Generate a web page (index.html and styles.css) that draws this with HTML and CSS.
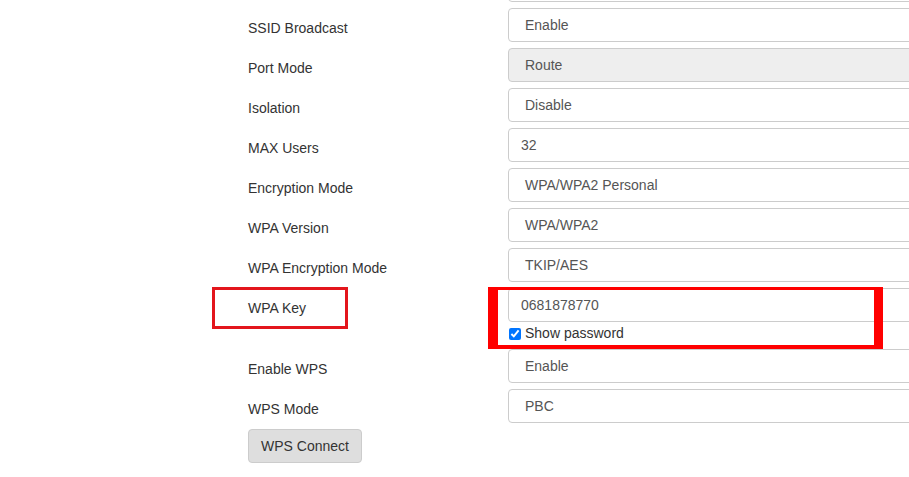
FILE: index.html
```html
<!DOCTYPE html>
<html lang="en">
<head>
  <meta charset="UTF-8">
  <meta name="viewport" content="width=device-width, initial-scale=1.0">
  <title>Wireless Settings</title>
  <link rel="stylesheet" href="styles.css">
</head>
<body>
  <div class="form">
    <!-- row scrolled above the top edge, only its box bottom shows -->
    <div class="row">
      <div class="label"></div>
      <div class="control"><div class="field"></div></div>
    </div>
    <div class="row">
      <div class="label">SSID Broadcast</div>
      <div class="control"><div class="field select">Enable</div></div>
    </div>
    <div class="row">
      <div class="label">Port Mode</div>
      <div class="control"><div class="field select disabled">Route</div></div>
    </div>
    <div class="row">
      <div class="label">Isolation</div>
      <div class="control"><div class="field select">Disable</div></div>
    </div>
    <div class="row">
      <div class="label">MAX Users</div>
      <div class="control"><div class="field">32</div></div>
    </div>
    <div class="row">
      <div class="label">Encryption Mode</div>
      <div class="control"><div class="field select">WPA/WPA2 Personal</div></div>
    </div>
    <div class="row">
      <div class="label">WPA Version</div>
      <div class="control"><div class="field select">WPA/WPA2</div></div>
    </div>
    <div class="row">
      <div class="label">WPA Encryption Mode</div>
      <div class="control"><div class="field select">TKIP/AES</div></div>
    </div>
    <div class="row key-row">
      <div class="label">WPA Key</div>
      <div class="control">
        <div class="field">0681878770</div>
        <label class="checkbox"><input type="checkbox" checked> Show password</label>
      </div>
      <!-- annotation marks -->
      <div class="mark mark-label"></div>
      <div class="mark mark-field"></div>
    </div>
    <div class="row">
      <div class="label">Enable WPS</div>
      <div class="control"><div class="field select">Enable</div></div>
    </div>
    <div class="row">
      <div class="label">WPS Mode</div>
      <div class="control"><div class="field select">PBC</div></div>
    </div>
    <div class="row">
      <button class="btn">WPS Connect</button>
    </div>
  </div>
</body>
</html>
```

FILE: styles.css
```css
html, body {
  overflow: hidden;
}
body {
  font-family: "Liberation Sans", Arial, sans-serif;
  font-size: 14px;
  color: #333;
  background-color: #fff;
  margin: 0;
  padding: 0;
}
.form {
  margin-top: -32px;
  padding-left: 248px;
}
.row {
  display: flex;
  margin-bottom: 6px;
}
.label {
  width: 260px;
  flex-shrink: 0;
  padding-top: 10px;
  line-height: 20px;
  color: #333;
}
.control {
  width: 600px;
  flex-shrink: 0;
}
.field {
  height: 34px;
  box-sizing: border-box;
  padding: 6px 12px;
  line-height: 20px;
  color: #555;
  border: 1px solid #ccc;
  border-radius: 4px;
  background-color: #fff;
}
.field.select {
  padding-left: 16px;
}
.field.disabled {
  background-color: #eee;
}
.checkbox {
  display: flex;
  align-items: center;
  height: 21px;
  line-height: 21px;
  padding-top: 1px;
  margin-bottom: -1px;
  color: #333;
}
.checkbox input {
  width: 12px;
  height: 12px;
  margin: 1px 4px 0 1px;
}
.key-row {
  position: relative;
}
.mark {
  position: absolute;
  box-sizing: border-box;
}
.mark-label {
  left: -36px;
  top: -1px;
  width: 136px;
  height: 42px;
  border: 3px solid #e3161c;
}
.mark-field {
  left: 240px;
  top: -1px;
  width: 395px;
  height: 62px;
  border-style: solid;
  border-color: #f00;
  border-width: 3px 9px 4px 10px;
}
.btn {
  font-family: "Liberation Sans", Arial, sans-serif;
  font-size: 14px;
  color: #333;
  height: 34px;
  width: 114px;
  padding: 6px 12px;
  line-height: 20px;
  background-color: #dedede;
  border: 1px solid #ccc;
  border-radius: 4px;
}
```
